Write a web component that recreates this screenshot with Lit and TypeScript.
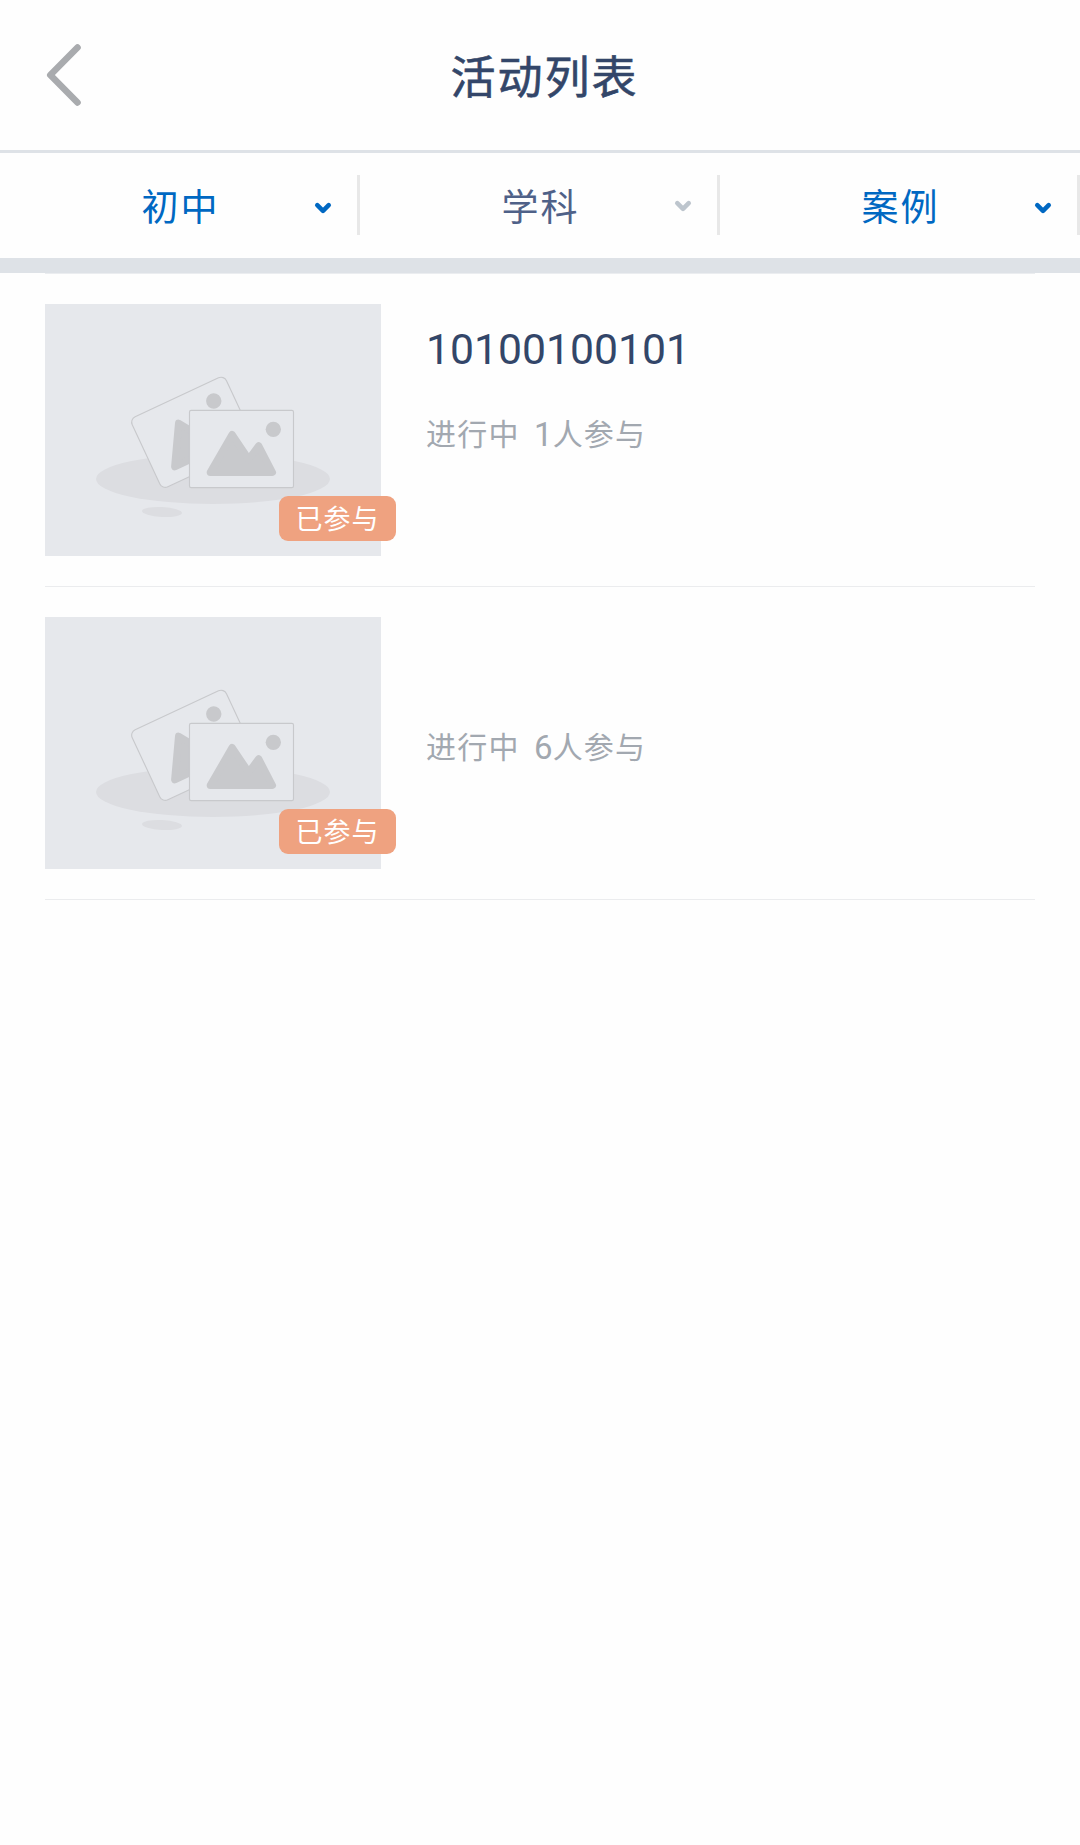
import { LitElement, html, css, svg } from "lit";
import { customElement, property } from "lit/decorators.js";
import { classMap } from "lit/directives/class-map.js";

interface Filter {
  label: string;
  active: boolean;
}

interface Activity {
  title: string;
  status: string;
  count: number;
  tag: string;
}

const FILTERS: Filter[] = [
  { label: "初中", active: true },
  { label: "学科", active: false },
  { label: "案例", active: true },
];

const ACTIVITIES: Activity[] = [
  { title: "10100100101", status: "进行中", count: 1, tag: "已参与" },
  { title: "", status: "进行中", count: 6, tag: "已参与" },
];

@customElement("activity-thumb")
export class ActivityThumb extends LitElement {
  @property() tag = "";

  static styles = css`
    :host {
      display: block;
      position: relative;
      width: 336px;
      height: 252px;
      flex: none;
    }
    .picture {
      display: block;
      width: 336px;
      height: 252px;
    }
    .tag {
      position: absolute;
      right: -15px;
      bottom: 15px;
      width: 117px;
      height: 45px;
      box-sizing: border-box;
      border-radius: 9px;
      background: #efa280;
      color: #fff;
      font-size: 27px;
      line-height: 49px;
      letter-spacing: 1px;
      text-align: center;
      white-space: nowrap;
    }
  `;

  private photo(radius: number) {
    return svg`
      <rect x="-156" y="-116" width="312" height="232" rx=${radius}
        fill="#e6e8ec" stroke="#c8c9cc" stroke-width="3.4"></rect>
      <circle cx="95.5" cy="-59" r="23" fill="#c8c9cc"></circle>
      <path d="M-93.500 70L-28 -43L21.500 31L51.500 -9L92.500 70Z"
        fill="#c8c9cc" stroke="#c8c9cc" stroke-width="22" stroke-linejoin="round"></path>
    `;
  }

  render() {
    return html`
      <svg class="picture" viewBox="45 42 1008 756">
        <rect x="45" y="42" width="1008" height="756" fill="#e6e8ec"></rect>
        <ellipse cx="549" cy="567" rx="351" ry="75" fill="#dcdde1"></ellipse>
        <ellipse cx="396" cy="666" rx="60" ry="15" fill="#dcdde1" transform="rotate(3 396 666)"></ellipse>
        <g transform="translate(489.500 427) rotate(-25)">${this.photo(18)}</g>
        <g transform="translate(634.500 477)">${this.photo(5)}</g>
      </svg>
      <span class="tag">${this.tag}</span>
    `;
  }
}

@customElement("app-root")
export class AppRoot extends LitElement {
  static styles = css`
    :host {
      display: block;
      min-height: 1845px;
      background: #fefefe;
      font-family: Roboto, "Noto Sans CJK SC", sans-serif;
    }
    .header {
      display: grid;
      grid-template-columns: 120px 1fr 120px;
      align-items: center;
      height: 150px;
      border-bottom: 3px solid #dee2e7;
    }
    .back {
      display: block;
      width: 120px;
      height: 150px;
    }
    .title {
      margin: 0;
      padding: 7px 0 0 9px;
      color: #334669;
      font-size: 45px;
      font-weight: 400;
      -webkit-text-stroke: 0.6px #334669;
      line-height: 60px;
      letter-spacing: 2px;
      text-align: center;
    }
    .filters {
      display: grid;
      grid-template-columns: repeat(3, 1fr);
      height: 105px;
      border-bottom: 15px solid #dee2e7;
    }
    .filter {
      display: grid;
      grid-template-columns: 1fr auto 1fr;
      align-items: center;
      color: #4f6188;
    }
    .filter.active {
      color: #0068c2;
    }
    .label {
      grid-column: 2;
      padding: 6px 0 0 1px;
      font-size: 37px;
      line-height: 50px;
      letter-spacing: 2px;
    }
    .end {
      display: flex;
      justify-content: flex-end;
      align-items: center;
      gap: 25px;
      padding-bottom: 1px;
    }
    .chevron {
      display: block;
      width: 18px;
      height: 16px;
      color: #bdc5cd;
      padding-top: 2px;
    }
    .active .chevron {
      color: #0068c2;
      padding-top: 5px;
    }
    .divider {
      width: 3px;
      height: 60px;
      background: #e8e8e8;
    }
    .list {
      margin: 0 45px;
      padding: 0;
      list-style: none;
      border-top: 1px solid #ebedf0;
    }
    .item {
      display: flex;
      gap: 45px;
      padding: 30px 0;
      border-bottom: 1px solid #ebecee;
    }
    .info {
      display: flex;
      flex-direction: column;
      padding-top: 15px;
    }
    .name {
      height: 60px;
      margin: 0;
      color: #334669;
      font-size: 42.7px;
      font-weight: 400;
      line-height: 60px;
    }
    .meta {
      display: flex;
      align-items: baseline;
      margin-top: 31px;
      color: #a2a8b0;
      font-size: 30px;
      line-height: 48px;
      letter-spacing: 1.2px;
    }
    .count {
      margin-left: 14.5px;
      font-size: 33px;
      letter-spacing: 0;
      transform: translateY(1px);
    }
  `;

  private renderFilter(f: Filter) {
    return html`
      <div class=${classMap({ filter: true, active: f.active })}>
        <span class="label">${f.label}</span>
        <span class="end">
          <svg class="chevron" viewBox="0 0 18 16">
            <path d="M3.300 5.200L9 10.800L14.700 5.200" fill="none" stroke="currentColor"
              stroke-width="4.600" stroke-linecap="round" stroke-linejoin="round"></path>
          </svg>
          <span class="divider"></span>
        </span>
      </div>
    `;
  }

  private renderActivity(a: Activity) {
    return html`
      <li class="item">
        <activity-thumb .tag=${a.tag}></activity-thumb>
        <div class="info">
          <h2 class="name">${a.title}</h2>
          <div class="meta">
            <span>${a.status}</span><span class="count">${a.count}</span><span>人参与</span>
          </div>
        </div>
      </li>
    `;
  }

  render() {
    return html`
      <header class="header">
        <svg class="back" viewBox="0 0 120 150">
          <path d="M77.500 47.500L50.300 75L77.500 102.500" fill="none" stroke="#a9abae"
            stroke-width="6.600" stroke-linecap="round" stroke-linejoin="round"></path>
        </svg>
        <h1 class="title">活动列表</h1>
      </header>
      <nav class="filters">${FILTERS.map((f) => this.renderFilter(f))}</nav>
      <ul class="list">${ACTIVITIES.map((a) => this.renderActivity(a))}</ul>
    `;
  }
}
